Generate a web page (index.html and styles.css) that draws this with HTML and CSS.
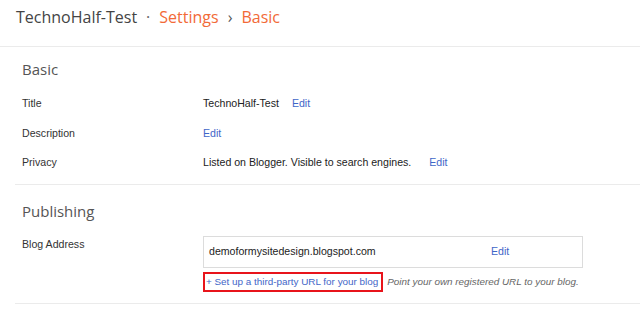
FILE: index.html
```html
<!DOCTYPE html>
<html lang="en">
<head>
  <meta charset="UTF-8" />
  <title>TechnoHalf-Test - Settings - Basic</title>
  <link rel="stylesheet" href="styles.css">
</head>
<body>

<div class="header">
  <span class="blog-name">TechnoHalf-Test</span><span class="dot">·</span><span class="crumb">Settings</span><span class="chevron">›</span><span class="crumb">Basic</span>
</div>

<div class="section section-basic">
  <h2>Basic</h2>
  <div class="row">
    <div class="label">Title</div>
    <div class="value">TechnoHalf-Test <a class="edit edit-title" href="#">Edit</a></div>
  </div>
  <div class="row">
    <div class="label">Description</div>
    <div class="value"><a class="edit" href="#">Edit</a></div>
  </div>
  <div class="row">
    <div class="label">Privacy</div>
    <div class="value">Listed on Blogger. Visible to search engines. <a class="edit edit-privacy" href="#">Edit</a></div>
  </div>
</div>

<div class="section section-publishing">
  <h2>Publishing</h2>
  <div class="address-row">
    <div class="label address-label">Blog Address</div>
    <div class="address-col">
      <div class="address-box">
        <span class="address">demoformysitedesign.blogspot.com</span>
        <a class="edit" href="#">Edit</a>
      </div>
      <div class="third-party">
        <a class="setup-link" href="#">+ Set up a third-party URL for your blog</a>
        <span class="hint">Point your own registered URL to your blog.</span>
      </div>
    </div>
  </div>
</div>

</body>
</html>
```

FILE: styles.css
```css
* {
  margin: 0;
  padding: 0;
  box-sizing: border-box;
}

body {
  background: #fff;
  color: #222;
  font-family: 'Liberation Sans', Arial, sans-serif;
  font-size: 10.6px;
  overflow: hidden;
}

a {
  color: #3f66c8;
  text-decoration: none;
}

.header {
  height: 47px;
  padding: 5px 16px 0;
  border-bottom: 1px solid #ebebeb;
  font-family: 'Open Sans', sans-serif;
  font-size: 16px;
  line-height: 24px;
  color: #444;
  white-space: nowrap;
}

.header .dot {
  margin: 0 9px 0 9px;
  color: #666;
}

.header .chevron {
  margin: 0 9px 0 9px;
  color: #555;
}

.header .crumb {
  color: #f26a37;
}

.section {
  margin-left: 15px;
  padding-left: 7px;
  border-bottom: 1px solid #ebebeb;
}

.section h2 {
  font-family: 'Open Sans', sans-serif;
  font-weight: 400;
  font-size: 15px;
  line-height: 20px;
  color: #555;
}

.section-basic {
  padding-top: 12px;
  padding-bottom: 6px;
}

.section-basic h2 {
  margin-bottom: 10px;
}

.row {
  display: flex;
  height: 29.5px;
  line-height: 29.5px;
}

.label {
  width: 181px;
  flex-shrink: 0;
  color: #333;
}

.value {
  color: #222;
}

.edit-title {
  margin-left: 10px;
}

.edit-privacy {
  margin-left: 15px;
}

.section-publishing {
  padding-top: 16px;
  padding-bottom: 11px;
}

.section-publishing h2 {
  margin-bottom: 15px;
}

.address-row {
  display: flex;
}

.address-label {
  line-height: 14px;
  padding-top: 1px;
}

.address-box {
  display: flex;
  width: 380px;
  height: 32px;
  border: 1px solid #dcdcdc;
  padding: 0 5px 2px 5px;
  line-height: 28px;
}

.address {
  width: 282px;
}

.third-party {
  display: flex;
  align-items: center;
  margin-top: 4px;
  font-size: 9.9px;
}

.setup-link {
  border: 2px solid #e8141b;
  padding: 0 3px 0 1px;
  line-height: 16px;
}

.hint {
  margin-left: 4px;
  font-style: italic;
  color: #666;
}
```
